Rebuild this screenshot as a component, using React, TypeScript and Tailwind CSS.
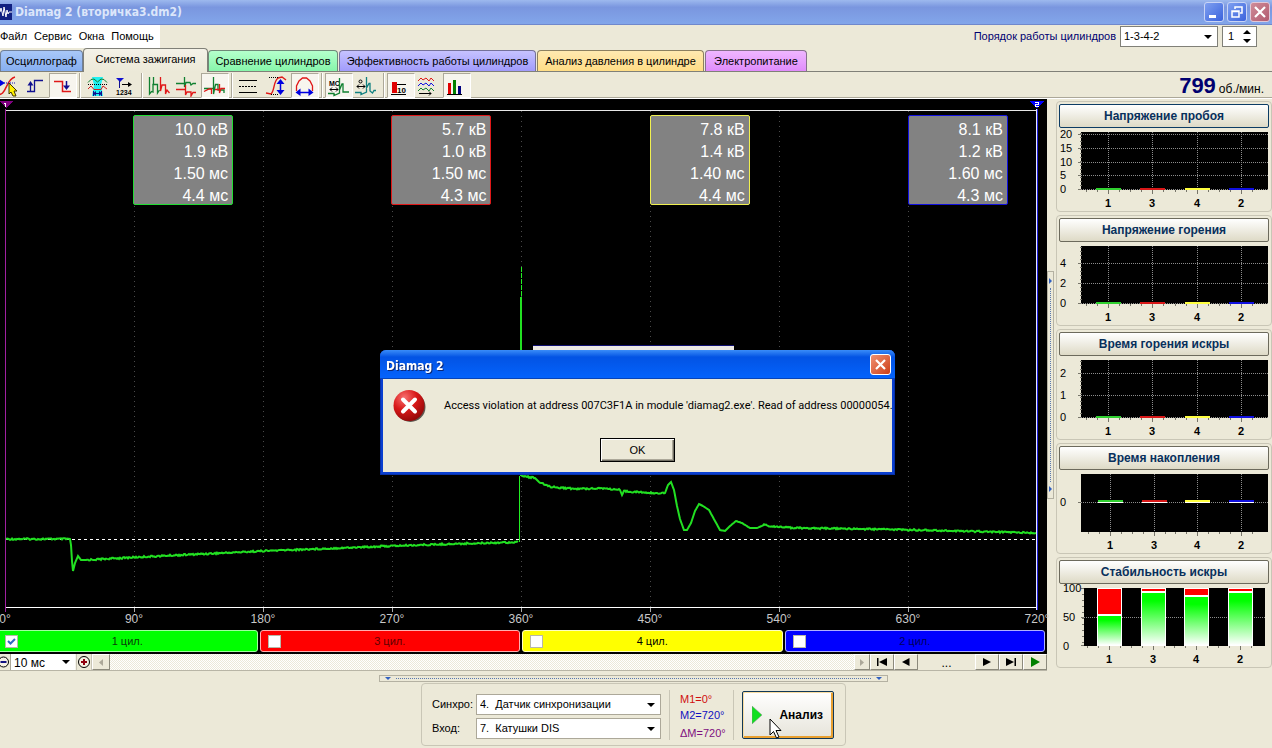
import type { ReactNode } from "react";

const CYLINDERS = [
  { id: "1", values: ["10.0 кВ", "1.9 кВ", "1.50 мс", "4.4 мс"], card: "border-[#22dd33]", strip: "bg-[#00ff00] border-[#a0ffa0]", text: "text-[#084008]", on: true },
  { id: "3", values: ["5.7 кВ", "1.0 кВ", "1.50 мс", "4.3 мс"], card: "border-[#e01818]", strip: "bg-[#ff0000] border-[#ffb0b0]", text: "text-[#600000]", on: false },
  { id: "4", values: ["7.8 кВ", "1.4 кВ", "1.40 мс", "4.4 мс"], card: "border-[#f0f050]", strip: "bg-[#ffff00] border-[#ffffc0]", text: "text-black", on: false },
  { id: "2", values: ["8.1 кВ", "1.2 кВ", "1.60 мс", "4.3 мс"], card: "border-[#1010e0]", strip: "bg-[#0000ff] border-[#b0b0ff]", text: "text-[#000060]", on: false },
];

const TABS = [
  { name: "Осциллограф", style: "w-[83px] h-[21px] from-[#a9c8f8] to-[#86aef0] border-[#6f7f98]" },
  { name: "Система зажигания", style: "w-[125px] h-[24px] -mb-px from-[#f4f2e8] to-[#ece9d8] border-[#808078] pb-0.5", active: true },
  { name: "Сравнение цилиндров", style: "w-[130px] h-[21px] mr-px from-[#b4ffcc] to-[#86f5aa] border-[#6f8878]" },
  { name: "Эффективность работы цилиндров", style: "w-[197px] h-[21px] mr-px from-[#c6c2ff] to-[#a19bfb] border-[#74719a]" },
  { name: "Анализ давления в цилиндре", style: "w-[167px] h-[21px] mr-px from-[#ffe9b0] to-[#ffdd85] border-[#8c8060]" },
  { name: "Электропитание", style: "w-[102px] h-[21px] from-[#efb6ff] to-[#e08cfb] border-[#86708c]" },
];

const DEGREES = ["0°", "90°", "180°", "270°", "360°", "450°", "540°", "630°", "720°"];

// ignition trace, kept as sparse knots; noise is added between them
const TRACE: [number, number][] = [
  [6, 440], [70, 440], [71, 446], [72, 462], [73, 472], [75, 464], [78, 457], [81, 461], [86, 461], [140, 458],
  [263, 452], [391, 447], [450, 445], [518, 443],
];
const BURN: [number, number][] = [
  [522, 377], [535, 379], [540, 384], [552, 388], [577, 390], [600, 389], [610, 390], [620, 391], [622, 396],
  [624, 392], [650, 394], [665, 394], [668, 386], [671, 383], [674, 391], [677, 407], [680, 420], [684, 431],
  [687, 431], [691, 424], [695, 412], [699, 405], [703, 407], [709, 411], [715, 422], [720, 431], [725, 432],
  [730, 427], [736, 422], [742, 424], [750, 429], [757, 429], [764, 426], [775, 428], [800, 429], [920, 431], [1036, 434],
];

function jitter(x: number) {
  const s = Math.sin(x * 12.9898) * 43758.5453;
  return (s - Math.floor(s) - 0.5) * 1.6;
}

function noisy(knots: [number, number][]) {
  const out: string[] = [];
  for (let i = 0; i < knots.length - 1; i++) {
    const [x0, y0] = knots[i];
    const [x1, y1] = knots[i + 1];
    for (let x = x0; x < x1; x++) {
      const n = x1 - x0 > 8 ? jitter(x) : 0;
      out.push(`${x},${(y0 + ((y1 - y0) * (x - x0)) / (x1 - x0) + n).toFixed(1)}`);
    }
  }
  out.push(knots[knots.length - 1].join(","));
  return out.join(" ");
}

function Arrow({ className = "" }: { className?: string }) {
  return (
    <svg viewBox="0 0 8 4" className={`w-2 h-1 pointer-events-none ${className}`}>
      <path d="M0 0H8L4 4Z" fill="currentColor" />
    </svg>
  );
}

function Select({ id, value, className }: { id: string; value: string; className: string }) {
  return (
    <div className={`relative bg-white ${className}`}>
      <select id={id} className="appearance-none w-full h-full pl-[3px] bg-transparent outline-none">
        <option>{value}</option>
      </select>
      <Arrow className="absolute right-[5px] top-1/2 -mt-0.5" />
    </div>
  );
}

function Scope() {
  return (
    <div className="relative flex-1">
      <svg viewBox="0 0 1047 513" preserveAspectRatio="none" className="absolute inset-0 w-full h-full" fill="none" shapeRendering="crispEdges">
        {[134, 263, 392, 521, 650, 779, 908].map((x) => (
          <g key={x}>
            <path d={`M${x + 0.5} 12V508`} stroke="#4a4a4a" strokeDasharray="1 4" />
            <path d={`M${x + 0.5} 509V513`} stroke="#aaa" />
          </g>
        ))}
        <path d="M5 11.500H1037" stroke="#e8e8e8" />
        <path d="M5 508.500H1037" stroke="#fff" />
        <path d="M5.500 10V513" stroke="#a020a0" />
        <path d="M1036.500 10V511" stroke="#e8e8ff" />
        <path d="M1037.500 10V511" stroke="#2020e0" />
        <path d="M6 440.500H1037" stroke="#fff" strokeDasharray="3 3" />
        <polyline points={noisy(TRACE)} stroke="#22e022" strokeWidth="2" shapeRendering="auto" />
        <path d="M519.500 443V377" stroke="#22f022" />
        <path d="M521.500 168V198" stroke="#22f022" strokeDasharray="5 1" />
        <path d="M521 198V377" stroke="#22e022" strokeWidth="2" />
        <polyline points={noisy(BURN)} stroke="#22e022" strokeWidth="2" shapeRendering="auto" />
        <path d="M-1 2H13L6 9Z" fill="#800080" />
        <path d="M1029 2H1045L1037 9Z" fill="#0000ff" />
        <path d="M4 4.500H5.500V8" stroke="#fff" />
        <path d="M1035 3.500H1038.500V5.500H1035.500V7.500H1039" stroke="#fff" />
      </svg>
      <div className="relative grid grid-cols-4 pl-1 pr-[10px] pt-4">
        {CYLINDERS.map((c) => (
          <ul key={c.id} className={`ml-[50%] w-[100px] h-[90px] pr-1 pt-[3px] border rounded-[2px] bg-[#828282] text-white text-[16px] leading-[22px] text-right overflow-hidden ${c.card}`}>
            {c.values.map((v) => (
              <li key={v}>{v}</li>
            ))}
          </ul>
        ))}
      </div>
    </div>
  );
}

function Transport({ label, d, color = "#000" }: { label: string; d: string; color?: string }) {
  return (
    <button aria-label={label} className="w-6 h-full flex items-center justify-center bg-[#ece9d8] border border-t-white border-l-white border-b-[#8c8a7c] border-r-[#8c8a7c]">
      <svg viewBox="0 0 12 10" className="w-3 h-2.5">
        <path d={d} fill={color} />
      </svg>
    </button>
  );
}

function Navigator() {
  return (
    <div className="h-[17px] flex border-b border-[#b8b5a6] bg-[#f6f4ec]">
      <button aria-label="Уменьшить" className="w-[11px] flex items-center justify-end bg-[#ece9d8] border-r border-[#aca899] overflow-hidden">
        <svg viewBox="0 0 12 12" className="w-3 h-3 shrink-0" fill="none">
          <circle cx="5.500" cy="6" r="5" stroke="#000" fill="#f6f0e4" />
          <path d="M2.500 6H8.500" stroke="#101080" strokeWidth="2" />
        </svg>
      </button>
      <Select id="scale" value="10 мс" className="w-16 text-[12px] mr-px" />
      <button aria-label="Увеличить" className="w-4 flex items-center justify-center bg-[#ece9d8] border-x border-[#c8c5b6]">
        <svg viewBox="0 0 14 14" className="w-3.5 h-3.5 shrink-0" fill="none">
          <circle cx="7" cy="7" r="5.500" stroke="#000" fill="#f6f0e4" />
          <path d="M4 7H10M7 4V10" stroke="#900010" strokeWidth="2" />
        </svg>
      </button>
      <button aria-label="Назад" className="w-[18px] flex items-center justify-center bg-[#ece9d8] border border-t-white border-l-white border-b-[#8c8a7c] border-r-[#8c8a7c]">
        <svg viewBox="0 0 4 7" className="w-1 h-[7px]"><path d="M4 0V7L0 3.500Z" fill="#aca899" /></svg>
      </button>
      <div className="flex-1 bg-[repeating-conic-gradient(#ffffff_0_25%,#ece9d8_0_50%)] bg-[length:2px_2px]" />
      <button aria-label="Вперёд" className="w-4 flex items-center justify-center bg-[#ece9d8] border border-t-white border-l-white border-b-[#8c8a7c] border-r-[#8c8a7c]">
        <svg viewBox="0 0 4 7" className="w-1 h-[7px]"><path d="M0 0V7L4 3.500Z" fill="#aca899" /></svg>
      </button>
      <Transport label="В начало" d="M1 1H2.500V9H1ZM11 1V9L3 5Z" />
      <Transport label="Предыдущий" d="M9.500 1V9L2 5Z" />
      <span className="w-[57px] bg-[#ece9d8] text-center text-[12px] leading-[18px]">...</span>
      <Transport label="Следующий" d="M2 1V9L10 5Z" />
      <Transport label="В конец" d="M1 1V9L9 5ZM9.500 1H11V9H9.500Z" />
      <Transport label="Пуск" d="M2 0V10L11 5Z" color="#008000" />
    </div>
  );
}

function ToolButton({ pressed, children }: { pressed?: boolean; children: ReactNode }) {
  return (
    <button
      className={`w-7 h-[25px] shrink-0 border ${
        pressed ? "border-t-[#aca899] border-l-[#aca899] border-b-white border-r-white bg-[#f7f5ee]" : "border-transparent"
      }`}
    >
      <svg viewBox="1 0 26 23" className="w-[26px] h-[23px]" fill="none" strokeWidth="1">
        {children}
      </svg>
    </button>
  );
}

function Separator() {
  return <span className="w-1.5 h-[25px] shrink-0 flex justify-center"><span className="w-0.5 border-l border-[#aca899] bg-white" /></span>;
}

function Toolbar() {
  return (
    <div className="h-[27px] flex items-start pt-px border-b border-white shadow-[inset_0_-1px_0_#aca899] overflow-hidden">
      <div className="flex items-start -ml-[7px]">
        <ToolButton>
          <path d="M3 20C14 24 12 5 22 3" stroke="#e01818" strokeWidth="1.500" />
          <path d="M7 9H22" stroke="#1010c0" strokeDasharray="1 1" />
          <path d="M6 5L12 9L6 13Z" fill="#0000e0" />
          <path d="M16 9V20L18 18L20 22H23L21 17H24Z" fill="#fff000" stroke="#403800" />
        </ToolButton>
        <ToolButton>
          <path d="M6 17.500H13.500V6.500H22" stroke="#101090" strokeWidth="1.300" />
          <path d="M9.500 17V10" stroke="#101090" strokeWidth="1.300" />
          <path d="M6.500 11.500L9.500 7L12.500 11.500Z" fill="#101090" />
        </ToolButton>
        <ToolButton pressed>
          <path d="M5 7.500H13.500V17.500H22" stroke="#e01818" strokeWidth="1.500" />
          <path d="M17.500 7V13" stroke="#101090" strokeWidth="1.500" />
          <path d="M14 11.500L17.500 16L21 11.500Z" fill="#101090" />
        </ToolButton>
        <Separator />
        <ToolButton>
          <path d="M9 3H20L18 11L20 22H9L11 11Z" fill="#20f0f0" />
          <path d="M5 8.500L8 5.500L11 5L14.500 8L18 5L21 5.500L24 8.500" stroke="#108030" />
          <path d="M5 15L8 12L11 15.500H18L20 12L24 15" stroke="#d02020" />
          <path d="M5 10.500H24" stroke="#000" strokeDasharray="1 1" />
          <path d="M10.500 17V22M18.500 17V22M11 19.500H18" stroke="#101090" />
          <path d="M10 19.500L13 17V22ZM19 19.500L16 17V22Z" fill="#101090" />
        </ToolButton>
        <ToolButton>
          <path d="M5 4H13L9 8Z" fill="#1010d0" />
          <path d="M8.500 7V14" stroke="#101090" />
          <path d="M11 10.500H19" stroke="#000" />
          <path d="M17 8L21 10.500L17 13Z" fill="#000" />
          <text x="5" y="21" fontSize="7" fontWeight="bold" fill="#000" fontFamily="Liberation Sans, sans-serif">1234</text>
        </ToolButton>
        <Separator />
        <ToolButton>
          <path d="M4.500 3V20L6.500 17.500L8 18V10.500H12.500V19L14.500 16" stroke="#108030" strokeWidth="1.300" />
          <path d="M8.500 3V11" stroke="#108030" strokeWidth="1.300" />
          <path d="M15.500 3V17L17 11H20.500V20L22 16L24.500 19" stroke="#e01818" strokeWidth="1.300" />
        </ToolButton>
        <ToolButton>
          <path d="M3 9.500H11.500V3V13L13 8.500H17L18 11L20 9.500H23" stroke="#108030" strokeWidth="1.300" />
          <path d="M3 15.500H12.500V11V21L14 18H18V22L20 18.500H23" stroke="#e01818" strokeWidth="1.300" />
        </ToolButton>
        <ToolButton pressed>
          <path d="M3 14.500H12.500V3V20L14.500 10.500H17V16H23V19" stroke="#108030" strokeWidth="1.300" />
          <path d="M3 17.500L8 15H10.500V20M14 15.500H18.500V10V19L20 14.500H24" stroke="#e01818" strokeWidth="1.300" />
        </ToolButton>
        <Separator />
        <ToolButton>
          <path d="M4 6.500H22M4 18.500H22" stroke="#000" />
          <path d="M4 12.500H22" stroke="#000" strokeDasharray="2 1" />
        </ToolButton>
        <ToolButton>
          <path d="M3 19L8 20C12 16 10 8 15 4L19 3L23 6" stroke="#e01818" strokeWidth="1.400" />
          <path d="M6 3.500H16M8 20.500H16" stroke="#000" strokeDasharray="1 1" />
          <path d="M17.500 8V17" stroke="#0000e0" strokeWidth="1.500" />
          <path d="M13.500 10L17.500 5L21.500 10ZM13.500 16L17.500 21L21.500 16Z" fill="#0000e0" />
        </ToolButton>
        <ToolButton pressed>
          <path d="M5.500 17V12L8 7L11.500 4H15.500L19 7L21.500 12V17" stroke="#e01818" strokeWidth="1.300" />
          <path d="M8 18.500H19" stroke="#0000e0" strokeWidth="1.500" />
          <path d="M4.500 18.500L9.500 14.500V22ZM22.500 18.500L17.500 14.500V22Z" fill="#0000e0" />
        </ToolButton>
        <Separator />
        <ToolButton pressed>
          <text x="4" y="12" fontSize="7" fontWeight="bold" fill="#000" fontFamily="Liberation Sans, sans-serif">МС</text>
          <path d="M5 15.500H13M7 13.500L5 15.500L7 17.500M11 13.500L13 15.500L11 17.500" stroke="#000" />
          <path d="M3 19.500H9V21.500L14.500 19V4V16L17 10H18V18H24" stroke="#108030" strokeWidth="1.300" />
        </ToolButton>
        <ToolButton>
          <circle cx="7.500" cy="7.500" r="1.500" stroke="#000" />
          <path d="M4 12.500H12M6 10.500L4 12.500L6 14.500M10 10.500L12 12.500L10 14.500" stroke="#000" />
          <path d="M2 18.500H8V20.500L13.500 18V3V14L16 9.500H17V17L19.500 19L21 16.500H23" stroke="#108080" strokeWidth="1.300" />
        </ToolButton>
        <Separator />
        <ToolButton pressed>
          <path d="M5 8H10V19H5Z" fill="#e00000" />
          <path d="M4 20H19V21H4ZM10 10H19V11H10Z" fill="#000" />
          <text x="10" y="19" fontSize="8" fontWeight="bold" fill="#000" fontFamily="Liberation Sans, sans-serif">10</text>
        </ToolButton>
        <ToolButton>
          <path d="M3 7L6 4L8 6L11 4L14 7L16 4L19 7" stroke="#e01818" />
          <path d="M3 12L6 9L8 11L11 9L14 12L16 9L19 12" stroke="#1010e0" />
          <path d="M3 17L6 14L8 16L11 14L14 17L16 14L19 17" stroke="#108030" />
          <path d="M4 19.500H16M14 17.500L16 19.500L14 21.500" stroke="#000" />
        </ToolButton>
        <ToolButton pressed>
          <path d="M5 9H8V20H5Z" fill="#e00000" />
          <path d="M10 6H13V20H10Z" fill="#008000" />
          <path d="M15 12H18V20H15Z" fill="#000080" />
          <path d="M4 20H19V21H4Z" fill="#000" />
        </ToolButton>
      </div>
      <p className="ml-auto pr-2 h-[25px] flex items-baseline text-[12px] leading-[25px]">
        <strong className="text-[22px] text-[#000070] mr-[3px]">799</strong>об./мин.
      </p>
    </div>
  );
}

const BAR_COLORS = ["#30d030", "#d81818", "#ffff40", "#1010e0"];

type Chart = { title: string; marks: [string, number][]; xs?: number[]; base?: number };

const CHARTS: Chart[] = [
  { title: "Напряжение пробоя", marks: [["20", 5], ["15", 19], ["10", 33], ["5", 46], ["0", 60]] },
  { title: "Напряжение горения", marks: [["4", 20], ["2", 40], ["0", 60]] },
  { title: "Время горения искры", marks: [["2", 16], ["1", 38], ["0", 60]] },
  { title: "Время накопления", marks: [["0", 31]], xs: [51, 95, 138, 182], base: 31 },
];

function Panel({ title, focused, children }: { title: string; focused?: boolean; children: ReactNode }) {
  return (
    <section className="border border-[#c9c6b6] rounded-[4px] px-0.5 pt-0.5 shrink-0">
      <button
        className={`block w-full h-6 rounded-[2px] border font-bold text-[12px] leading-5 text-[#08305c] bg-linear-to-b from-white to-[#dedac6] ${
          focused ? "border-[#0c3c64]" : "border-[#6c6a5c]"
        }`}
      >
        {title}
      </button>
      <svg viewBox="0 0 210 82" className="mt-px w-full h-[82px] overflow-visible" fontSize="11" fontFamily="Liberation Sans, sans-serif" shapeRendering="crispEdges">
        {children}
      </svg>
    </section>
  );
}

function XAxis({ xs }: { xs: number[] }) {
  return (
    <>
      {xs.map((x, i) => (
        <g key={x}>
          <path d={`M${x - 21.5} 61V63M${x - 10.5} 61V63M${x + 0.5} 61V65M${x + 11.5} 61V63`} stroke="#77756a" />
          <text x={x} y="78" textAnchor="middle" fontWeight="bold">{CYLINDERS[i].id}</text>
        </g>
      ))}
    </>
  );
}

function LevelChart({ chart, focused }: { chart: Chart; focused: boolean }) {
  const xs = chart.xs ?? [49, 93, 138, 182];
  const base = chart.base ?? 60;
  return (
    <Panel title={chart.title} focused={focused}>
      <rect x="22" y="3" width="187" height="58" fill="#000" />
      {!chart.base && <path d="M21.500 4V60" stroke="#77756a" strokeWidth="2" strokeDasharray="1 3" />}
      {chart.marks.map(([label, y]) => (
        <g key={label}>
          <path d={`M22 ${y + 0.5}H209`} stroke="#8c8c8c" strokeDasharray="1 1" />
          <path d={`M19 ${y + 0.5}H22`} stroke="#77756a" />
          <text x="1" y={y + 4}>{label}</text>
        </g>
      ))}
      {xs.map((x, i) => (
        <g key={x}>
          <path d={`M${x + 0.5} 3V61`} stroke="#8c8c8c" strokeDasharray="1 1" />
          {chart.base && <rect x={x - 12} y={base} width="25" height="1" fill="#fff" />}
          <rect x={x - 12} y={chart.base ? base - 2 : base - 1} width="25" height="2" fill={BAR_COLORS[i]} />
        </g>
      ))}
      <XAxis xs={xs} />
    </Panel>
  );
}

function StabilityChart() {
  const bars: [number, number][] = [[38, 29], [82, 6], [125, 10], [169, 6]];
  return (
    <Panel title="Стабильность искры">
      <defs>
        <linearGradient id="fade" x1="0" y1="0" x2="0" y2="1">
          <stop offset="0.15" stopColor="#00ff00" />
          <stop offset="1" stopColor="#ffffff" />
        </linearGradient>
      </defs>
      <rect x="25" y="3" width="181" height="58" fill="#000" />
      <path d="M24 3V60" stroke="#77756a" strokeWidth="2" strokeDasharray="1 5" />
      <path d="M25 32.500H206" stroke="#8c8c8c" strokeDasharray="1 1" />
      <path d="M22 3.500H25M22 32.500H25M22 60.500H25" stroke="#77756a" />
      <text x="4" y="7">100</text>
      <text x="4" y="36">50</text>
      <text x="4" y="65">0</text>
      {bars.map(([x, top]) => (
        <g key={x}>
          <rect x={x} y="3" width="25" height="58" fill="#fff" />
          <rect x={x + 1} y="4" width="23" height={top - 4} fill="#ff0000" />
          <rect x={x + 1} y={top + 2} width="23" height={58 - top} fill="url(#fade)" />
        </g>
      ))}
      <XAxis xs={[50, 94, 137, 181]} />
    </Panel>
  );
}

function TitleBar() {
  return (
    <header className="h-[25px] flex items-center pr-0.5 gap-[3px] bg-linear-to-b from-[#9db9ee] via-[#7a96df] via-30% to-[#82a6ea] border-b border-[#7088cc] text-[#dce6fa]">
      <svg viewBox="0 0 12 16" className="w-3 h-4 bg-[#102080]" fill="none">
        <path d="M0 8L1 4L3 12L4 3L6 13L7 6L8 10L9 8H12" stroke="#fff" />
      </svg>
      <h1 className="flex-1 font-['DejaVu_Sans_Condensed',sans-serif] font-bold text-[12px]">Diamag 2 (вторичка3.dm2)</h1>
      <button aria-label="Свернуть" className="w-5 h-5 rounded-[3px] border border-[#c8d4f6] bg-linear-to-br from-[#7f9ff0] to-[#3c62dc]">
        <svg viewBox="0 0 18 18" className="w-full h-full"><path d="M4 12H11V15H4Z" fill="#fff" /></svg>
      </button>
      <button aria-label="Восстановить" className="w-5 h-5 rounded-[3px] border border-[#c8d4f6] bg-linear-to-br from-[#7f9ff0] to-[#3c62dc]">
        <svg viewBox="0 0 18 18" className="w-full h-full" fill="none" stroke="#fff">
          <path d="M7 6V4H14V10H12" strokeWidth="1.500" />
          <path d="M4 8H11V14H4ZM4 8.500H11" strokeWidth="1.500" />
        </svg>
      </button>
      <button aria-label="Закрыть" className="w-5 h-5 rounded-[3px] border border-[#e0c8d8] bg-linear-to-br from-[#cf8c98] to-[#b25a70]">
        <svg viewBox="0 0 18 18" className="w-full h-full"><path d="M4 4L14 14M14 4L4 14" stroke="#fff" strokeWidth="2.200" /></svg>
      </button>
    </header>
  );
}

function ErrorDialog() {
  return (
    <div role="alertdialog" aria-labelledby="err-title" className="fixed left-[380px] top-[350px] w-[515px] h-[125px] flex flex-col rounded-t-[6px] bg-[#0a3fd0] px-[3px] pb-[3px] shadow-[inset_0_0_0_1px_#0831a8]">
      <div className="-mx-[3px] h-[29px] shrink-0 flex items-center justify-between pl-1.5 pr-1 rounded-t-[6px] bg-linear-to-b from-[#3a8cf8] via-[#0353e4] via-25% to-[#0463fc] border-b border-[#0844b8]">
        <h2 id="err-title" className="pt-1 text-white font-['DejaVu_Sans_Condensed',sans-serif] font-bold text-[12px] drop-shadow-[1px_1px_0_#0a2878]">Diamag 2</h2>
        <button aria-label="Закрыть" className="w-[21px] h-[21px] rounded-[3px] border border-white bg-linear-to-br from-[#f09070] to-[#cc3c10]">
          <svg viewBox="0 0 19 19" className="w-full h-full"><path d="M5 5L14 14M14 5L5 14" stroke="#fff" strokeWidth="2.200" /></svg>
        </button>
      </div>
      <div className="flex-1 bg-[#ece9d8] flex flex-col items-center pt-2.5">
        <div className="self-stretch flex items-center gap-[18px] pl-2.5">
          <svg viewBox="0 0 33 34" className="w-[33px] h-[34px] shrink-0">
            <defs>
              <radialGradient id="ball" cx="0.35" cy="0.25" r="0.8">
                <stop offset="0" stopColor="#f87070" />
                <stop offset="0.5" stopColor="#d81818" />
                <stop offset="1" stopColor="#900808" />
              </radialGradient>
            </defs>
            <circle cx="17.500" cy="18" r="15" fill="#5c5850" />
            <circle cx="16" cy="16.500" r="15.500" fill="url(#ball)" />
            <path d="M10 10.500L22 22.500M22 10.500L10 22.500" stroke="#fff" strokeWidth="4" strokeLinecap="round" />
          </svg>
          <p className="font-[Roboto,sans-serif] text-[11px] whitespace-nowrap">Access violation at address 007C3F1A in module 'diamag2.exe'. Read of address 00000054.</p>
        </div>
        <button className="mt-[15px] w-[75px] h-6 border border-black bg-[#ece9d8] text-[11px] shadow-[inset_1px_1px_0_#fff,inset_-1px_-1px_0_#716f64,inset_-2px_-2px_0_#aca899]">OK</button>
      </div>
    </div>
  );
}

function ControlBar() {
  return (
    <footer className="h-[77px] shrink-0 flex flex-col items-center pt-1 pr-[5px] text-[11px]">
      <div className="w-[509px] h-[7px] flex items-center gap-1 px-1 border border-[#b4b1a2] text-[#3060c0]">
        <Arrow className="w-1.5 h-[3px]" />
        <span className="flex-1 border-t border-dotted border-[#5878b0]" />
        <Arrow className="w-1.5 h-[3px]" />
      </div>
      <div className="mt-px h-[63px] w-[425px] flex items-center pl-2.5 border border-[#c9c6b6] rounded-[4px]">
        <div className="grid grid-cols-[44px_185px] gap-y-[3px] pt-1 items-center">
          <label htmlFor="sync">Синхро:</label>
          <Select id="sync" value={"4.\u00a0 Датчик синхронизации"} className="h-[21px] border border-[#aca899]" />
          <label htmlFor="input">Вход:</label>
          <Select id="input" value={"7.\u00a0 Катушки DIS"} className="h-[21px] border border-[#aca899]" />
        </div>
        <div className="ml-2 w-[65px] h-[50px] pl-2.5 border-x border-[#c9c6b6] flex flex-col leading-4">
          <span className="text-[#d01010] mt-px">M1=0°</span>
          <span className="text-[#1010c0]">M2=720°</span>
          <span className="text-[#801080] mt-0.5">ΔM=720°</span>
        </div>
        <button className="relative ml-2 w-[92px] h-[48px] flex items-center justify-between pl-[9px] pr-2.5 border border-[#103858] rounded-[2px] text-[12px] font-bold bg-linear-to-b from-white to-[#e6e4da] shadow-[inset_1px_1px_0_#f8dca0,inset_-2px_-2px_0_#e8a030]">
          <svg viewBox="0 0 10 18" className="w-2.5 h-[18px]"><path d="M0 0V18L10 9Z" fill="#10e020" stroke="#888" strokeWidth="0.500" /></svg>
          Анализ
          <svg viewBox="0 0 13 21" className="absolute left-[26px] top-[26px] w-[13px] h-[21px]">
            <path d="M1 1V17L4.500 13.500L7.500 20L10 19L7 12.500H12Z" fill="#fff" stroke="#000" />
          </svg>
        </button>
      </div>
    </footer>
  );
}

export default function App() {
  return (
    <div className="min-h-screen flex flex-col bg-[#ece9d8] text-black font-['Liberation_Sans',sans-serif] overflow-hidden">
      <TitleBar />
      <div className="h-6 flex items-start text-[11px]">
        <nav className="h-[23px] w-40 flex items-center gap-[7px] bg-white whitespace-nowrap">
          <a href="#file">Файл</a>
          <a href="#service">Сервис</a>
          <a href="#windows">Окна</a>
          <a href="#help">Помощь</a>
        </nav>
        <div className="ml-auto mr-[15px] pt-px flex items-center gap-1">
          <label htmlFor="order" className="text-[#000070]">Порядок работы цилиндров</label>
          <Select id="order" value="1-3-4-2" className="w-[98px] h-[21px] border border-[#808078]" />
          <div className="w-[35px] h-[21px] flex items-center bg-white border border-[#808078]">
            <input aria-label="Цилиндр" defaultValue="1" className="w-5 pl-[5px] bg-transparent outline-none" />
            <div className="flex flex-col gap-[5px]">
              <button aria-label="Больше" className="flex"><Arrow className="rotate-180" /></button>
              <button aria-label="Меньше" className="flex"><Arrow /></button>
            </div>
          </div>
        </div>
      </div>
      <div role="tablist" className="h-[23px] flex items-end border-b border-[#808078] text-[11px]">
        {TABS.map((t) => (
          <button
            key={t.name}
            role="tab"
            aria-selected={!!t.active}
            className={`shrink-0 border border-b-0 rounded-t-[4px] bg-linear-to-b whitespace-nowrap ${t.style}`}
          >
            {t.name}
          </button>
        ))}
      </div>
      <Toolbar />

      <main className="flex-1 flex">
        <div className="flex-1 min-w-0 flex flex-col bg-black">
          <Scope />
          <div className="h-[17px] flex justify-between pl-[5px] pr-[10px] text-[12px] leading-[14px] text-[#c8c8c8]">
            {DEGREES.map((d) => (
              <span key={d} className="w-0 flex justify-center">{d}</span>
            ))}
          </div>
          <div className="h-[25px] flex gap-0.5 -ml-[3px] pr-0.5 pb-0.5 pt-px text-[11px]">
            {CYLINDERS.map((c) => (
              <label key={c.id} className={`flex-1 flex items-center pl-[7px] border rounded-[3px] ${c.strip} ${c.text}`}>
                <span className="relative w-[13px] h-[13px] flex">
                  <input type="checkbox" defaultChecked={c.on} className="appearance-none w-[13px] h-[13px] bg-white border border-[#b8b8a8]" />
                  {c.on && (
                    <svg viewBox="0 0 13 13" className="absolute inset-0 pointer-events-none" fill="none">
                      <path d="M3 6L5.500 8.500L10 4" stroke="#3068c0" strokeWidth="2" />
                    </svg>
                  )}
                </span>
                <span className="flex-1 text-center pr-5">{c.id} цил.</span>
              </label>
            ))}
          </div>
          <Navigator />
        </div>
        <div className="w-[7px] flex flex-col justify-center">
          <div className="h-[228px] flex flex-col items-center justify-between py-1.5 border border-[#b4b1a2] text-[#3060c0]">
            <svg viewBox="0 0 3 6" className="w-[3px] h-1.5"><path d="M0 0V6L3 3Z" fill="currentColor" /></svg>
            <span className="flex-1 my-1 border-l border-dotted border-[#5878b0]" />
            <svg viewBox="0 0 3 6" className="w-[3px] h-1.5"><path d="M0 0V6L3 3Z" fill="currentColor" /></svg>
          </div>
        </div>
        <aside className="w-[218px] pl-0.5 pt-0.5 flex flex-col gap-[3px]">
          {CHARTS.map((c, i) => (
            <LevelChart key={c.title} chart={c} focused={i === 0} />
          ))}
          <StabilityChart />
        </aside>
      </main>
      <ControlBar />

      {/* window left half hidden behind the message box */}
      <div className="fixed left-[533px] top-[345px] w-[201px] h-[5px] border-t border-[#101070] bg-[#ece9e4]" />
      <ErrorDialog />
    </div>
  );
}
